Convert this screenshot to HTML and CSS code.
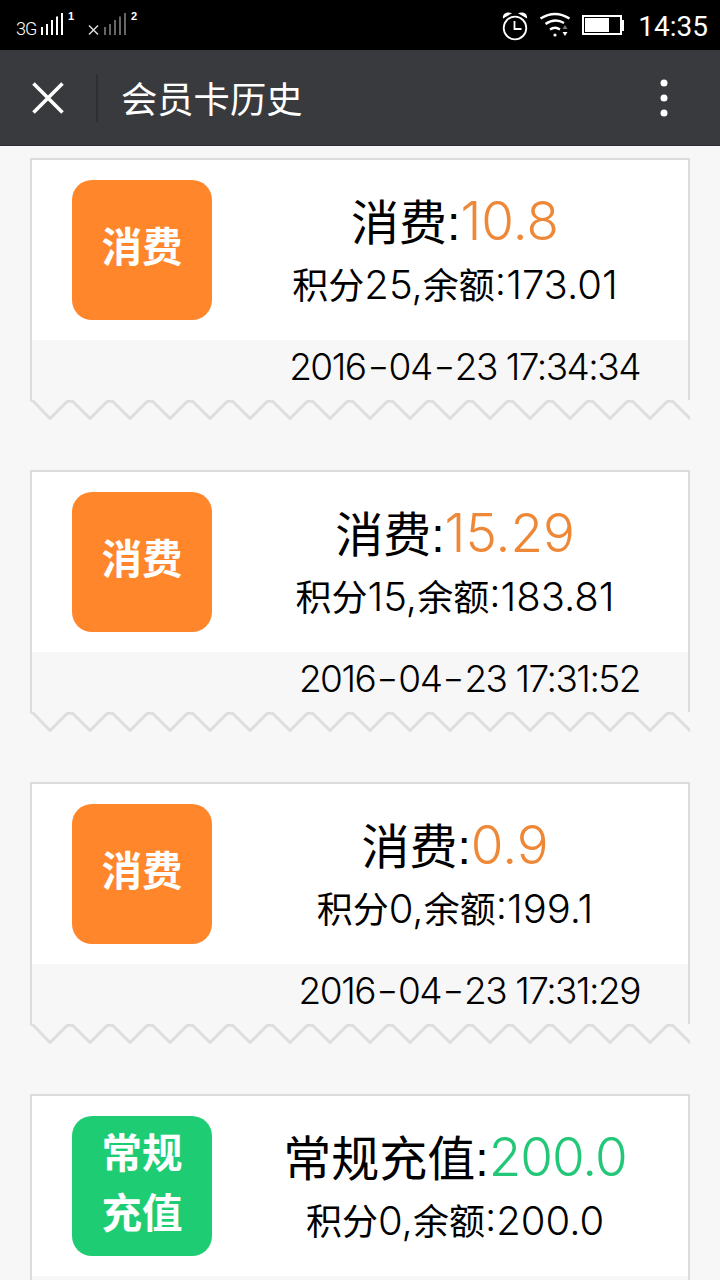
FILE: index.html
```html
<!DOCTYPE html>
<html lang="zh-CN">
<head>
    <meta charset="UTF-8">
    <meta name="viewport" content="width=device-width, initial-scale=1.0">
    <title>会员卡历史</title>
    <link rel="stylesheet" href="styles.css">
</head>

<body>
    <!-- Zigzag edge shared by all cards -->
    <svg class="defs" width="0" height="0">
        <symbol id="zigzag" viewBox="0 0 660 20">
            <path d="M0 0 L3 1 L20 18.5 L37.500 1.200 H42.500 L60 18.500 L77.500 1.200 H82.500 L100 18.500 L117.500 1.200 H122.500 L140 18.500 L157.500 1.200 H162.500 L180 18.500 L197.500 1.200 H202.500 L220 18.500 L237.500 1.200 H242.500 L260 18.500 L277.500 1.200 H282.500 L300 18.500 L317.500 1.200 H322.500 L340 18.500 L357.500 1.200 H362.500 L380 18.500 L397.500 1.200 H402.500 L420 18.500 L437.500 1.200 H442.500 L460 18.500 L477.500 1.200 H482.500 L500 18.500 L517.500 1.200 H522.500 L540 18.500 L557.500 1.200 H562.500 L580 18.500 L597.500 1.200 H602.500 L620 18.500 L637.500 1.200 H642.500 L661 19.500" fill="none" stroke="#dedede" stroke-width="3"/>
        </symbol>
    </svg>

    <div class="status-bar">
        <div class="status-left">
            <span class="network">3G</span>
            <svg class="signal" width="22" height="24" viewBox="0 0 22 24">
                <path d="M1 15v8M6 12v11M11 8v15M16 4.500v18.500M21 1v22" stroke="#fff" stroke-width="2"/>
            </svg>
            <span class="sim">1</span>
            <svg class="no-signal" width="38" height="24" viewBox="0 0 38 24">
                <path d="M1 13.500l9 9M10 13.500l-9 9" stroke="#ddd" stroke-width="1.500"/>
                <path d="M17 15v8M22 12v11M27 8v15M32 4.500v18.500M37 1v22" stroke="#666" stroke-width="2"/>
            </svg>
            <span class="sim">2</span>
        </div>
        <div class="status-right">
            <svg class="alarm" width="26" height="30" viewBox="0 0 26 30" fill="none" stroke="#fff">
                <circle cx="13" cy="17" r="11.300" stroke-width="1.800"/>
                <path d="M12.500 10v8h7" stroke-width="1.800"/>
                <path d="M1 7.500C0 3 5 0 10 2.200L1 7.500zM25 7.500C26 3 21 0 16 2.200L25 7.500z" fill="#fff" stroke="none"/>
            </svg>
            <svg class="wifi" width="32" height="26" viewBox="0 0 32 26" fill="none" stroke="#fff">
                <path d="M1.500 6.500Q16 -2.500 30.500 6.500" stroke-width="2.400"/>
                <path d="M6.500 12Q16 5.500 25 11" stroke-width="2.400"/>
                <path d="M11 17.500Q16 14 21 17.500" stroke-width="2.400"/>
                <circle cx="16" cy="23" r="1.600" fill="#fff" stroke="none"/>
                <path d="M23.500 17h5l-2.500-4z" fill="#777" stroke="none"/>
                <path d="M23.500 20h5l-2.500 4z" fill="#fff" stroke="none"/>
            </svg>
            <svg class="battery" width="42" height="20" viewBox="0 0 42 20">
                <rect x="1" y="1" width="38" height="18" fill="#000" stroke="#fff" stroke-width="2"/>
                <rect x="3" y="3" width="24" height="14" fill="#fff"/>
                <rect x="40" y="5" width="2" height="11" fill="#fff"/>
            </svg>
            <span class="time">14:35</span>
        </div>
    </div>

    <div class="header">
        <svg class="close" width="32" height="32" viewBox="0 0 32 32">
            <path d="M1.500 1.500l29 29M30.500 1.500l-29 29" stroke="#fff" stroke-width="3.600"/>
        </svg>
        <div class="divider"></div>
        <h1>会员卡历史</h1>
        <svg class="more" width="8" height="38" viewBox="0 0 8 38" fill="#fff">
            <circle cx="4" cy="4" r="3.500"/>
            <circle cx="4" cy="19" r="3.500"/>
            <circle cx="4" cy="34" r="3.500"/>
        </svg>
    </div>

    <div class="list">
        <div class="card">
            <div class="card-body">
                <div class="badge">消费</div>
                <div class="info">
                    <div class="amount">消费:<span class="number">10.8</span></div>
                    <div class="detail">积分<span>25,</span>余额<span>:173.01</span></div>
                </div>
            </div>
            <div class="date">2016<i>-</i>04<i>-</i>23 17:34:34</div>
            <svg class="edge"><use href="#zigzag"/></svg>
        </div>

        <div class="card">
            <div class="card-body">
                <div class="badge">消费</div>
                <div class="info">
                    <div class="amount">消费:<span class="number">15.29</span></div>
                    <div class="detail">积分<span>15,</span>余额<span>:183.81</span></div>
                </div>
            </div>
            <div class="date">2016<i>-</i>04<i>-</i>23 17:31:52</div>
            <svg class="edge"><use href="#zigzag"/></svg>
        </div>

        <div class="card">
            <div class="card-body">
                <div class="badge">消费</div>
                <div class="info">
                    <div class="amount">消费:<span class="number">0.9</span></div>
                    <div class="detail">积分<span>0,</span>余额<span>:199.1</span></div>
                </div>
            </div>
            <div class="date">2016<i>-</i>04<i>-</i>23 17:31:29</div>
            <svg class="edge"><use href="#zigzag"/></svg>
        </div>

        <div class="card recharge">
            <div class="card-body">
                <div class="badge">常规<br>充值</div>
                <div class="info">
                    <div class="amount">常规充值:<span class="number">200.0</span></div>
                    <div class="detail">积分<span>0,</span>余额<span>:200.0</span></div>
                </div>
            </div>
            <div class="date"></div>
        </div>
    </div>
</body>
</html>
```
FILE: styles.css
```css
* {
    box-sizing: border-box;
}

body {
    margin: 0;
    height: 1280px;
    overflow: hidden;
    display: flex;
    flex-direction: column;
    font-family: "Liberation Sans", "Noto Sans CJK SC", sans-serif;
    background-color: #f7f7f7;
    color: #000;
}

svg {
    display: block;
    flex-shrink: 0;
}

.defs {
    position: absolute;
}

/* Status bar */
.status-bar {
    flex-shrink: 0;
    height: 50px;
    display: flex;
    justify-content: space-between;
    background-color: #000;
    color: #fff;
}

.status-left,
.status-right {
    display: flex;
}

.status-left {
    padding: 12px 0 0 16px;
}

.network {
    width: 25px;
    padding-top: 7px;
    font: 300 18px/20px Roboto, sans-serif;
    letter-spacing: -1px;
}

.sim {
    width: 10px;
    margin-left: 5px;
    font: bold 11px/8px "Liberation Sans", sans-serif;
}

.no-signal {
    margin-left: 10px;
}

.status-right {
    padding: 11px 12px 0 0;
}

.wifi {
    margin: 1px 0 0 11px;
}

.battery {
    margin: 4px 0 0 11px;
}

.time {
    margin: 0 0 0 14px;
    font: 28px/32px Roboto, sans-serif;
}

/* Title bar */
.header {
    flex-shrink: 0;
    height: 96px;
    display: flex;
    align-items: center;
    padding: 0 52px 0 32px;
    background-color: #393a3e;
    border-bottom: 1px solid #302d35;
    color: #fff;
}

.divider {
    width: 2px;
    height: 48px;
    margin: 0 23px 0 32px;
    background-color: #2e2f32;
}

.header h1 {
    flex: 1;
    margin: 0;
    padding-bottom: 1px;
    font-size: 36.3px;
    font-weight: normal;
}

/* History cards */
.list {
    flex: 1;
    min-height: 0;
    overflow: hidden;
    padding: 12px 30px 0;
}

.card {
    margin-bottom: 50px;
}

.card-body {
    height: 182px;
    display: flex;
    align-items: center;
    padding: 0 40px;
    border: 2px solid #dcdcdc;
    border-bottom: none;
    background-color: #fff;
}

.badge {
    width: 140px;
    height: 140px;
    flex-shrink: 0;
    display: flex;
    align-items: center;
    justify-content: center;
    padding-bottom: 5px;
    border-radius: 20px;
    background-color: #ff862a;
    color: #fff;
    font-size: 40.5px;
    font-weight: bold;
    line-height: 60px;
}

.info {
    flex: 1;
    margin: 3px -5px 0 45px;
    text-align: center;
    white-space: nowrap;
}

.amount {
    height: 68px;
    font-size: 48px;
    line-height: 68px;
}

.number,
.detail span,
.date {
    font-family: Inter, sans-serif;
    font-weight: 300;
}

.number {
    font-size: 53px;
    color: #ee8736;
}

.detail {
    height: 62px;
    font-size: 36px;
    line-height: 60px;
}

.detail span {
    font-size: 40px;
}

.date {
    height: 60px;
    padding-right: 48px;
    border: solid #dcdcdc;
    border-width: 0 2px;
    font-size: 37px;
    letter-spacing: -1.5px;
    line-height: 54px;
    text-align: right;
}

.date i {
    display: inline-block;
    width: 23px;
    text-align: center;
    font-style: normal;
    transform: scaleX(1.3);
}

.edge {
    width: 660px;
    height: 20px;
}

.recharge .badge {
    background-color: #1ecd73;
}

.recharge .number {
    color: #22c777;
    letter-spacing: -1px;
}
```
